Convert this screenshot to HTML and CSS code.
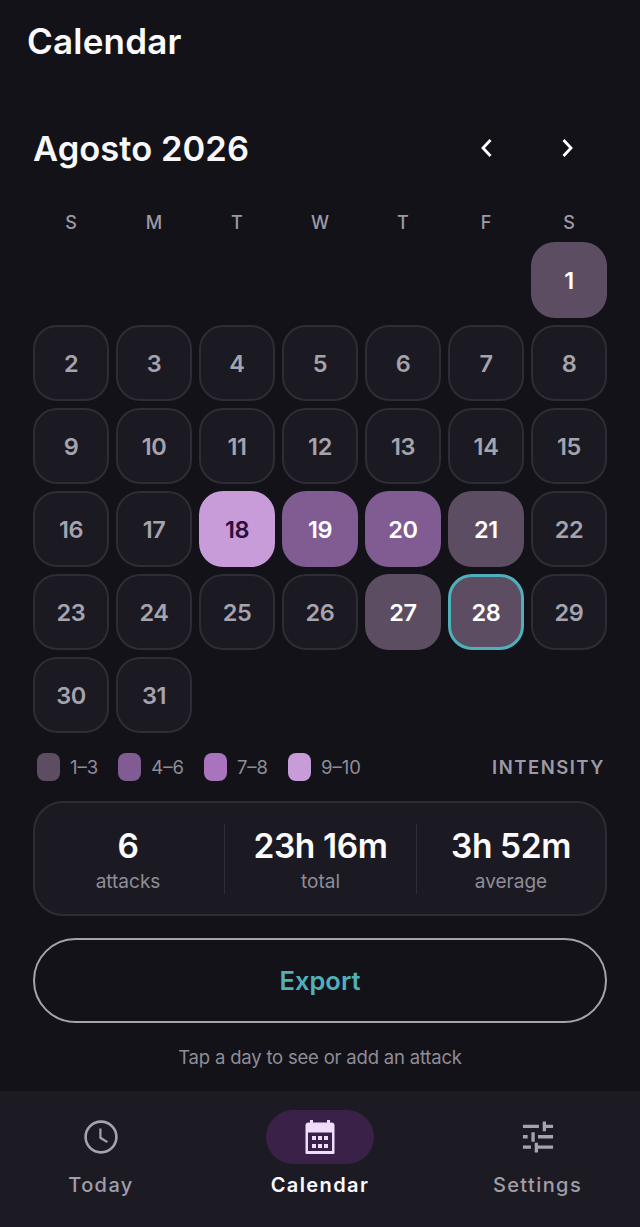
FILE: index.html
```html
<!DOCTYPE html>
<html lang="en">
<head>
<meta charset="utf-8">
<title>Calendar</title>
<link rel="stylesheet" href="styles.css">
</head>
<body>
<div class="app">
  <header class="topbar"><h1>Calendar</h1></header>
  <main class="content">
    <div class="month-row">
      <h2>Agosto 2026</h2>
      <div class="month-nav">
        <button class="nav-btn" aria-label="Previous"><svg width="24" height="24" viewBox="0 0 24 24"><path d="M15.500 4l-7.500 8 7.500 8" /></svg></button>
        <button class="nav-btn" aria-label="Next"><svg width="24" height="24" viewBox="0 0 24 24"><path d="M8.500 4l7.500 8-7.500 8" /></svg></button>
      </div>
    </div>
    <div class="grid weekdays">
      <span>S</span><span>M</span><span>T</span><span>W</span><span>T</span><span>F</span><span>S</span>
    </div>
    <div class="grid days">
      <span class="blank"></span><span class="blank"></span><span class="blank"></span><span class="blank"></span><span class="blank"></span><span class="blank"></span>
      <div class="day l1">1</div>
      <div class="day">2</div><div class="day">3</div><div class="day">4</div><div class="day">5</div><div class="day">6</div><div class="day">7</div><div class="day">8</div>
      <div class="day">9</div><div class="day">10</div><div class="day">11</div><div class="day">12</div><div class="day">13</div><div class="day">14</div><div class="day">15</div>
      <div class="day">16</div><div class="day">17</div><div class="day l4">18</div><div class="day l2">19</div><div class="day l2">20</div><div class="day l1">21</div><div class="day">22</div>
      <div class="day">23</div><div class="day">24</div><div class="day">25</div><div class="day">26</div><div class="day l1">27</div><div class="day l1 today">28</div><div class="day">29</div>
      <div class="day">30</div><div class="day">31</div>
    </div>
    <div class="legend">
      <div class="legend-items">
        <div class="legend-item"><i class="swatch s1"></i>1–3</div>
        <div class="legend-item"><i class="swatch s2"></i>4–6</div>
        <div class="legend-item"><i class="swatch s3"></i>7–8</div>
        <div class="legend-item"><i class="swatch s4"></i>9–10</div>
      </div>
      <span class="legend-title">INTENSITY</span>
    </div>
    <section class="stats">
      <div class="stat"><strong>6</strong><span>attacks</span></div>
      <div class="stat"><strong>23h 16m</strong><span>total</span></div>
      <div class="stat"><strong>3h 52m</strong><span>average</span></div>
    </section>
    <button class="export">Export</button>
    <p class="hint">Tap a day to see or add an attack</p>
  </main>
  <nav class="bottom-nav">
    <div class="tab">
      <div class="tab-icon">
        <svg width="36" height="36" viewBox="0 0 36 36" fill="none" stroke="#a5a3ae"><circle cx="18" cy="18" r="15.4" stroke-width="2.6"/><path d="M17.4 9.5v9.3l7 4.3" stroke-width="2.2"/></svg>
      </div>
      <span>Today</span>
    </div>
    <div class="tab active">
      <div class="tab-icon">
        <svg width="32" height="36" viewBox="0 0 32 36"><path fill="#f0dcfb" d="M6 1h3v2.500h14V1h3v2.500h1.500a3 3 0 0 1 3 3V34a1 1 0 0 1-1 1H2.500a1 1 0 0 1-1-1V6.500a3 3 0 0 1 3-3H6z"/><path fill="#3a2148" d="M4 13.500h24V32H4z"/><path fill="#f0dcfb" d="M8 17h4v4H8zM14 17h4v4h-4zM20 17h4v4h-4zM8 25h4v4H8zM14 25h4v4h-4zM20 25h4v4h-4z"/></svg>
      </div>
      <span>Calendar</span>
    </div>
    <div class="tab">
      <div class="tab-icon">
        <svg width="32" height="36" viewBox="0 0 34 36" fill="#a5a3ae"><path d="M1 5h17v3.500H1zM22 1.500h3.500V5H33v3.500h-7.500V12H22zM1 16h5v3.500H1zM10 13h3.500v10H10zM17 16h16v3.500H17zM1 27h8.500v3.500H1zM13.500 24H17v3h16v3.500H17v4h-3.500z"/></svg>
      </div>
      <span>Settings</span>
    </div>
  </nav>
</div>
</body>
</html>
```
FILE: styles.css
```css
* { box-sizing: border-box; }
html, body { margin: 0; padding: 0; background: #131218; }
body { font-family: "Inter", "Liberation Sans", sans-serif; color: #f5f5f7; }
.app { width: 640px; height: 1227px; display: flex; flex-direction: column; overflow: hidden; }
.topbar { height: 84px; padding: 20px 27px 0; }
.topbar h1 { margin: 0; font-size: 35px; line-height: 42px; font-weight: 600; letter-spacing: 0.2px; color: #fbfbfd; }
.content { flex: 1; padding: 0 33px; display: flex; flex-direction: column; }
.month-row { height: 124px; display: flex; justify-content: space-between; align-items: flex-start; padding-top: 43px; }
.month-row h2 { margin: 0; font-size: 34.500px; line-height: 44px; font-weight: 600; letter-spacing: 0.050px; color: #f8f8fa; }
.month-nav { display: flex; gap: 56px; padding: 9px 28px 0 0; }
.nav-btn { width: 24px; height: 24px; padding: 0; border: 0; background: none; display: block; }
.nav-btn svg { display: block; fill: none; stroke: #fff; stroke-width: 2.800; }
.grid { display: grid; grid-template-columns: repeat(7, 76px); column-gap: 7px; }
.weekdays { height: 28px; margin-bottom: 6px; justify-items: center; align-items: center; color: #9c9aa5; font-size: 18px; font-weight: 500; }
.weekdays span { display: block; }
.days { row-gap: 7px; grid-auto-rows: 76px; }
.day { display: flex; align-items: center; justify-content: center; border-radius: 24px; background: #1b1a22; border: 2px solid #2e2d35; color: #a5a3ae; font-size: 23.500px; font-weight: 600; letter-spacing: -0.4px; }
.l1, .l2, .l4 { border: 0; color: #fff; }
.l1 { background: #5c4d63; }
.l2 { background: #805c92; }
.l4 { background: #c89cd8; color: #2c0f3c; }
.today { border: 3.500px solid #4fb0bb; }
.legend { height: 34px; margin-top: 17px; display: flex; align-items: center; justify-content: space-between; }
.legend-items { display: flex; gap: 20px; padding-left: 4px; }
.legend-item { display: flex; align-items: center; gap: 10px; font-size: 18.500px; color: #8f8d98; font-weight: 400; }
.swatch { display: block; width: 23px; height: 28px; border-radius: 8px; }
.s1 { background: #5c4d63; }
.s2 { background: #805c92; }
.s3 { background: #a874bd; }
.s4 { background: #c89cd8; }
.legend-title { font-size: 18.500px; font-weight: 600; letter-spacing: 1.500px; color: #9c9aa5; padding-right: 2px; }
.stats { height: 115px; margin-top: 17px; display: grid; grid-template-columns: 189px 192px 189px; align-items: center; background: #1b1a22; border: 2px solid #2e2d35; border-radius: 30px; }
.stat { height: 70px; display: flex; flex-direction: column; align-items: center; justify-content: space-between; border-left: 1.500px solid #2f2e37; }
.stat:first-child { border-left: 0; padding-right: 3px; }
.stat strong { margin-top: 2px; font-size: 33.500px; line-height: 40px; font-weight: 600; letter-spacing: -0.4px; color: #fbfbfd; }
.stat span { font-size: 19px; line-height: 24px; color: #8f8d98; }
.export { height: 85px; margin-top: 22px; background: none; border: 2px solid #a5a3ae; border-radius: 43px; color: #4fb0bb; font-family: inherit; font-size: 25.500px; font-weight: 600; }
.hint { margin: 22px 0 0; text-align: center; font-size: 18.500px; line-height: 24px; letter-spacing: -0.2px; color: #8f8d98; }
.bottom-nav { height: 136px; background: #1c1b23; display: grid; grid-template-columns: 202px 236px 199px; padding-top: 19px; }
.tab { display: flex; flex-direction: column; align-items: center; color: #a09ea9; font-size: 20px; font-weight: 500; letter-spacing: 1.400px; }
.tab-icon { width: 108px; height: 54px; display: flex; align-items: center; justify-content: center; border-radius: 27px; margin-bottom: 8px; }
.tab span { line-height: 26px; }
.active { color: #fbfbfd; font-weight: 600; }
.active .tab-icon { background: #3a2148; }
```
